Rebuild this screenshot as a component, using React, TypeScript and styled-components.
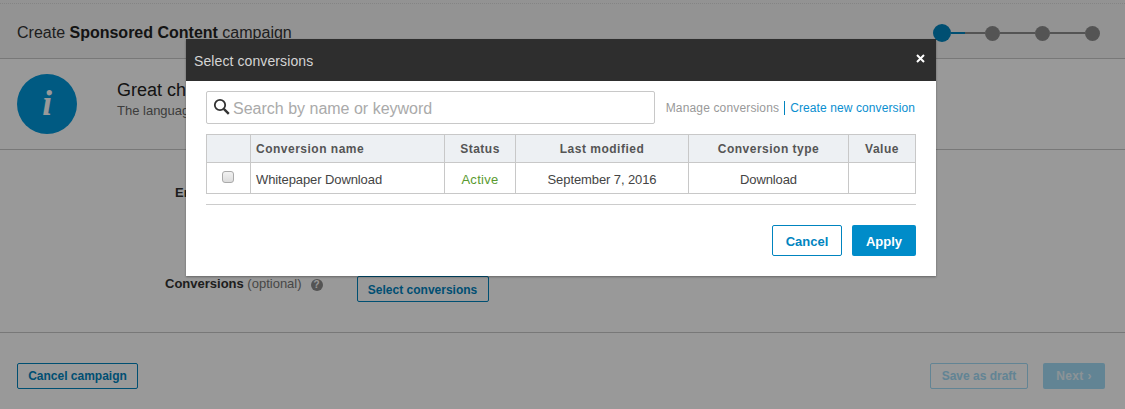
import React from 'react';
import styled, { createGlobalStyle } from 'styled-components';

const GlobalStyle = createGlobalStyle`
  html, body {
    margin: 0;
    padding: 0;
    height: 100%;
    overflow: hidden;
    background: #fff;
  }
  * {
    box-sizing: border-box;
  }
  body {
    font-family: 'Liberation Sans', Arial, sans-serif;
  }
`;

const Page = styled.div`
  position: relative;
  width: 1125px;
  height: 409px;
  overflow: hidden;
  background: #fff;
  display: flex;
  flex-direction: column;
`;

const TopStrip = styled.div`
  height: 4px;
  flex: none;
  background: #f5f5f5;
  border-bottom: 1px dotted #dcdcdc;
`;

const Header = styled.header`
  height: 55px;
  flex: none;
  padding: 0 25px 0 17px;
  display: flex;
  align-items: center;
  justify-content: space-between;
  background: #f5f5f5;
  border-bottom: 1px solid #c8c8c8;
`;

const Title = styled.h1`
  margin: 4px 0 0;
  font-size: 16px;
  font-weight: 400;
  color: #333;
  b {
    font-weight: 700;
    color: #222;
  }
`;

const Stepper = styled.div`
  display: flex;
  align-items: center;
  margin-top: 4px;
`;

const Dot = styled.span<{ active?: boolean }>`
  flex: none;
  width: ${p => (p.active ? 18 : 15)}px;
  height: ${p => (p.active ? 18 : 15)}px;
  border-radius: 50%;
  background: ${p => (p.active ? '#0084bf' : '#8c8c8c')};
`;

const Link = styled.span<{ width: number; color?: string }>`
  flex: none;
  width: ${p => p.width}px;
  height: 2px;
  background: ${p => p.color ?? '#8c8c8c'};
`;

const Notice = styled.section`
  height: 91px;
  flex: none;
  padding: 15px 17px 0;
  display: flex;
  gap: 40px;
  border-bottom: 1px solid #c8c8c8;
`;

const InfoCircle = styled.div`
  width: 60px;
  height: 60px;
  flex: none;
  border-radius: 50%;
  background: #0097d9;
  color: #fff;
  display: flex;
  align-items: center;
  justify-content: center;
  font-family: 'Liberation Serif', serif;
  font-size: 35px;
  font-style: italic;
  font-weight: 700;
`;

const NoticeText = styled.div`
  padding-top: 6px;
  display: flex;
  flex-direction: column;
  gap: 3px;
`;

const NoticeTitle = styled.div`
  font-size: 18px;
  line-height: 21px;
  color: #222;
`;

const NoticeSub = styled.div`
  font-size: 13px;
  line-height: 14px;
  color: #666;
`;

const Form = styled.section`
  height: 183px;
  flex: none;
  padding: 35px 0 0 165px;
  display: flex;
  flex-direction: column;
  gap: 75px;
  border-bottom: 1px solid #c8c8c8;
`;

const FormRow = styled.div`
  display: flex;
  align-items: flex-start;
`;

const FieldLabel = styled.label<{ indent?: number }>`
  margin-left: ${p => p.indent ?? 0}px;
  font-size: 13px;
  font-weight: 700;
  line-height: 16px;
  color: #333;
  white-space: nowrap;
`;

const Optional = styled.span`
  font-weight: 400;
  color: #777;
`;

const HelpIcon = styled.span`
  width: 12px;
  height: 12px;
  flex: none;
  margin: 3px 0 0 9px;
  border-radius: 50%;
  background: #8c8c8c;
  color: #fff;
  font-size: 10px;
  font-weight: 700;
  line-height: 12px;
  text-align: center;
`;

const OutlineButton = styled.button<{ width: number; height?: number; tone?: string }>`
  width: ${p => p.width}px;
  height: ${p => p.height ?? 26}px;
  padding: 0;
  border: 1px solid ${p => p.tone ?? '#0084bf'};
  border-radius: 2px;
  background: transparent;
  color: ${p => p.tone ?? '#0084bf'};
  font-family: inherit;
  font-size: 12px;
  font-weight: 700;
`;

const SelectButton = styled(OutlineButton)`
  margin-left: 34px;
  padding-top: 2px;
`;

const Footer = styled.footer`
  flex: 1;
  padding: 30px 20px 0 17px;
  display: flex;
  align-items: flex-start;
  justify-content: space-between;
`;

const FooterActions = styled.div`
  display: flex;
  gap: 15px;
`;

const NextButton = styled.button`
  width: 62px;
  height: 26px;
  padding: 0;
  border: 0;
  border-radius: 2px;
  background: #a3dcf7;
  color: #e8f5fb;
  font-family: inherit;
  font-size: 12px;
  font-weight: 700;
  letter-spacing: 0.4px;
`;

const Overlay = styled.div`
  position: absolute;
  inset: 0;
  background: rgba(0, 0, 0, 0.4);
`;

const Modal = styled.div`
  position: absolute;
  left: 186px;
  top: 39px;
  width: 750px;
  height: 237px;
  background: #fff;
  box-shadow: 0 1px 2px rgba(0, 0, 0, 0.35);
  display: flex;
  flex-direction: column;
`;

const ModalHeader = styled.div`
  height: 42px;
  flex: none;
  padding: 2px 8px 0;
  display: flex;
  align-items: center;
  justify-content: space-between;
  background: #2e2e2e;
  color: #d4d4d4;
  font-size: 14px;
  letter-spacing: 0.1px;
`;

const CloseIcon = styled.svg`
  width: 9px;
  height: 9px;
  margin: 0 3px 6px 0;
`;

const ModalBody = styled.div`
  flex: 1;
  padding: 10px 20px 0;
  display: flex;
  flex-direction: column;
`;

const SearchRow = styled.div`
  display: flex;
  align-items: center;
  justify-content: space-between;
`;

const SearchBox = styled.div`
  width: 449px;
  height: 33px;
  padding: 2px 6px 0;
  display: flex;
  align-items: center;
  gap: 3px;
  border: 1px solid #c8c8c8;
  border-radius: 2px;
  color: #aaa;
  font-size: 16px;
`;

const SearchIcon = styled.svg`
  width: 17px;
  height: 17px;
  flex: none;
  margin-top: -4px;
`;

const ModalLinks = styled.div`
  display: flex;
  align-items: center;
  margin-right: 1px;
  font-size: 12px;
  letter-spacing: 0.15px;
`;

const MutedLink = styled.span`
  color: #999;
  padding-right: 5px;
  border-right: 1px solid #0084bf;
  line-height: 14px;
`;

const BlueLink = styled.span`
  color: #0a8fd0;
  padding-left: 5px;
  letter-spacing: 0.1px;
`;

const Table = styled.div`
  margin-top: 10px;
  width: 710px;
  display: grid;
  grid-template-columns: 44px 194px 71px 173px 160px 67px;
  border-top: 1px solid #c8c8c8;
  border-left: 1px solid #c8c8c8;
`;

const Cell = styled.div<{ head?: boolean; left?: boolean; color?: string }>`
  height: ${p => (p.head ? 28 : 31)}px;
  padding: ${p => (p.head ? 0 : 2)}px ${p => (p.left ? 5 : 0)}px 0;
  display: flex;
  align-items: center;
  justify-content: ${p => (p.left ? 'flex-start' : 'center')};
  border-right: 1px solid #c8c8c8;
  border-bottom: 1px solid #c8c8c8;
  background: ${p => (p.head ? '#edf0f3' : '#fff')};
  color: ${p => p.color ?? (p.head ? '#555' : '#444')};
  font-size: ${p => (p.head ? 12 : 13)}px;
  font-weight: ${p => (p.head ? 700 : 400)};
  letter-spacing: ${p => (p.head ? 0.5 : -0.1)}px;
  white-space: nowrap;
`;

const StatusCell = styled(Cell)`
  letter-spacing: 0.3px;
`;

const CheckCell = styled(Cell)`
  padding: 0 1px 0 0;
`;

const CheckBox = styled.span`
  width: 12px;
  height: 12px;
  margin-top: -2px;
  border: 1px solid #aaa;
  border-radius: 3px;
  background: linear-gradient(#f2f2f2, #dcdcdc);
`;

const Rule = styled.div`
  margin-top: 10px;
  height: 1px;
  background: #ccc;
`;

const ModalActions = styled.div`
  margin-top: 20px;
  display: flex;
  justify-content: flex-end;
  gap: 10px;
`;

const ModalCancel = styled(OutlineButton)`
  padding-top: 1px;
  font-size: 13px;
`;

const ApplyButton = styled.button`
  width: 64px;
  height: 31px;
  padding: 1px 0 0;
  border: 0;
  border-radius: 2px;
  background: #008cc9;
  color: #fff;
  font-family: inherit;
  font-size: 13px;
  font-weight: 700;
`;

const headers = ['', 'Conversion name', 'Status', 'Last modified', 'Conversion type', 'Value'];

export default function App() {
  return (
    <>
      <GlobalStyle />
      <Page>
        <TopStrip />
        <Header>
          <Title>
            Create <b>Sponsored Content</b> campaign
          </Title>
          <Stepper>
            <Dot active />
            <Link width={14} color="#0084bf" />
            <Link width={20} />
            <Dot />
            <Link width={35} />
            <Dot />
            <Link width={35} />
            <Dot />
          </Stepper>
        </Header>
        <Notice>
          <InfoCircle>i</InfoCircle>
          <NoticeText>
            <NoticeTitle>Great ch</NoticeTitle>
            <NoticeSub>The languag</NoticeSub>
          </NoticeText>
        </Notice>
        <Form>
          <FormRow>
            <FieldLabel indent={10}>En</FieldLabel>
          </FormRow>
          <FormRow>
            <FieldLabel>
              Conversions <Optional>(optional)</Optional>
            </FieldLabel>
            <HelpIcon>?</HelpIcon>
            <SelectButton width={132}>Select conversions</SelectButton>
          </FormRow>
        </Form>
        <Footer>
          <OutlineButton width={121}>Cancel campaign</OutlineButton>
          <FooterActions>
            <OutlineButton width={98} tone="#a3dcf7">Save as draft</OutlineButton>
            <NextButton>Next ›</NextButton>
          </FooterActions>
        </Footer>
        <Overlay />
        <Modal>
          <ModalHeader>
            Select conversions
            <CloseIcon viewBox="0 0 9 9">
              <path d="M1 1l7 7M8 1L1 8" stroke="#fff" strokeWidth="2" />
            </CloseIcon>
          </ModalHeader>
          <ModalBody>
            <SearchRow>
              <SearchBox>
                <SearchIcon viewBox="0 0 17 17">
                  <circle cx="7" cy="7" r="5.2" fill="none" stroke="#333" strokeWidth="1.8" />
                  <path d="M10.8 10.8L15.8 15.8" stroke="#333" strokeWidth="2.4" />
                </SearchIcon>
                Search by name or keyword
              </SearchBox>
              <ModalLinks>
                <MutedLink>Manage conversions</MutedLink>
                <BlueLink>Create new conversion</BlueLink>
              </ModalLinks>
            </SearchRow>
            <Table>
              {headers.map((h, i) => (
                <Cell head left={i === 1} key={i}>
                  {h}
                </Cell>
              ))}
              <CheckCell>
                <CheckBox />
              </CheckCell>
              <Cell left>Whitepaper Download</Cell>
              <StatusCell color="#5a9a2f">Active</StatusCell>
              <Cell>September 7, 2016</Cell>
              <Cell>Download</Cell>
              <Cell />
            </Table>
            <Rule />
            <ModalActions>
              <ModalCancel width={70} height={31}>Cancel</ModalCancel>
              <ApplyButton>Apply</ApplyButton>
            </ModalActions>
          </ModalBody>
        </Modal>
      </Page>
    </>
  );
}
